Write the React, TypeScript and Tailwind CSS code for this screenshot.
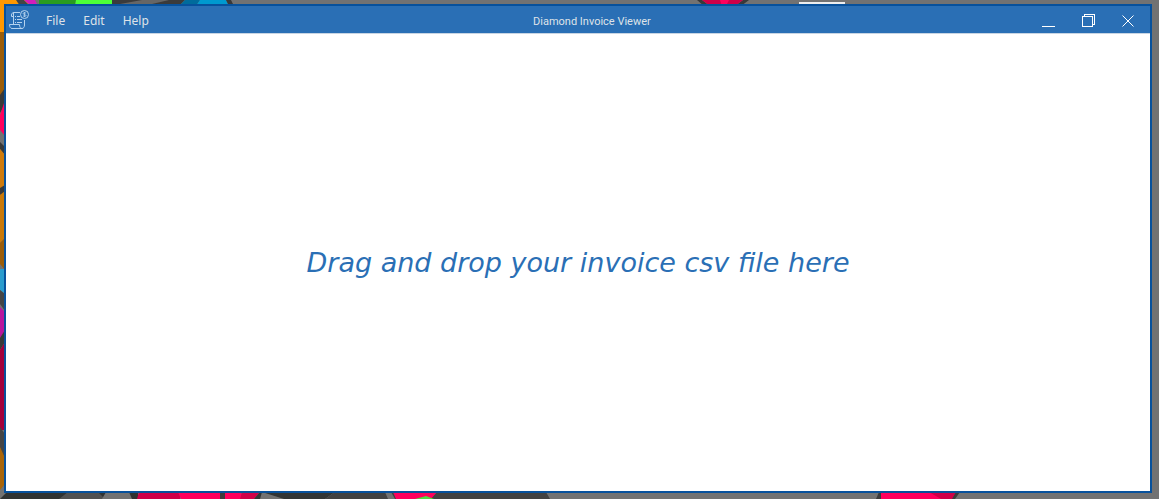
function Wallpaper() {
  return (
    <svg className="absolute inset-0 h-full w-full" viewBox="0 0 1159 499" preserveAspectRatio="none" aria-hidden="true">
      <path fill="#727272" d="M0 0H1159V499H0Z" />
      <path fill="#ff9800" d="M0 0H27L34 6H0Z" />
      <path fill="#454545" d="M16 0H24L30 6H20Z" />
      <path fill="#d31dbc" d="M24 0H35L38 6H31Z" />
      <path fill="#299b20" d="M39 0H76L75 6H39Z" />
      <path fill="#4dff37" d="M76 0H112V6H75Z" />
      <path fill="#3b3b3b" d="M112 0H185L179 6H112Z" />
      <path fill="#666" d="M142 0L120 4H152L169 0Z" />
      <path fill="#006b9c" d="M185 0H200L196 6H179Z" />
      <path fill="#0099cf" d="M200 0H226L229 6H196Z" />
      <path fill="#393939" d="M226 0H231L234 6H229ZM697 0H702L710 6H704ZM743 0H749L741 6H735Z" />
      <path fill="#cf0048" d="M702 0H743L735 6H710Z" />
      <path fill="#ff005d" d="M720 0H729L726 6H722Z" />
      <path fill="#eee" d="M799 2H845V4H799Z" />
      <path fill="#ff9800" d="M0 6H5V32H0Z" />
      <path fill="#9b5d09" d="M0 32H5V95H0Z" />
      <path fill="#393939" d="M0 95L5 88V105L0 113Z" />
      <path fill="#ff005d" d="M0 115L5 100V136L0 130Z" />
      <path fill="#727272" d="M0 130L5 137V150L0 142Z" />
      <path fill="#393939" d="M0 142L5 147V155L0 149Z" />
      <path fill="#cf7b0c" d="M0 149L5 155V186L0 190Z" />
      <path fill="#393939" d="M0 188L5 185V192L0 195Z" />
      <path fill="#c97909" d="M0 195L5 191V238L0 243Z" />
      <path fill="#9b5d09" d="M0 243L5 238V270L0 264Z" />
      <path fill="#299cce" d="M0 269H5V294L0 290Z" />
      <path fill="#454545" d="M0 290L5 294V311L0 304Z" />
      <path fill="#b8169d" d="M0 307L5 312V332L0 338Z" />
      <path fill="#393939" d="M0 338L5 330V342L0 350Z" />
      <path fill="#a3003b" d="M0 350L5 342V430H0Z" />
      <path fill="#454545" d="M0 427L5 434V460L0 448Z" />
      <path fill="#a96509" d="M0 447L5 458V484L0 490Z" />
      <path fill="#303332" d="M0 499L7 492H138V499Z" />
      <path fill="#515151" d="M68 492H98L105 499H59Z" />
      <path fill="#727272" d="M106 492H129L132 499H102Z" />
      <path fill="#cf0048" d="M139 492H180V499H137Z" />
      <path fill="#ff005d" d="M178 492H240L246 499H181Z" />
      <path fill="#403b3c" d="M220 492H225V499H220Z" />
      <path fill="#cf0048" d="M242 492H260L254 499H240Z" />
      <path fill="#323535" d="M260 492H335L325 499H254Z" />
      <path fill="#727272" d="M262 492L284 499H260Z" />
      <path fill="#424242" d="M335 492H546L550 499H325Z" />
      <path fill="#727272" d="M385 492H391L395 499H388Z" />
      <path fill="#ff005d" d="M393 492H437L431 499H396Z" />
      <path fill="#54da43" d="M415 499L426 496L434 499Z" />
      <path fill="#3b3b3b" d="M879 492H960L955 499H876Z" />
      <path fill="#ff005d" d="M881 492H930L945 499H881Z" />
      <path fill="#cf0048" d="M929 492H956L952 499H941Z" />
    </svg>
  );
}

function InvoiceIcon() {
  return (
    <svg className="h-5 w-5" viewBox="0 0 20 20" fill="none" stroke="#b5d3ee" aria-hidden="true">
      <path d="M11 2.500H5C3.500 2.500 2.500 3.500 2.500 5V6.500H4.500M4.500 3V14.500M15.500 10V15C15.500 17 14.500 18.500 13 18.500H3C1.500 18.500.5 17 .5 14.500H10.500C10.500 17 11.500 18.500 13 18.500" />
      <path d="M6 6.500H7M8 6.500H11M6 9.500H7M8 9.500H13M6 12.500H7M8 12.500H13" />
      <circle cx="15.500" cy="4.500" r="4" />
      <path strokeWidth=".8" d="M17 3.200C16 2.500 14.200 2.500 14.200 3.600S17 4.400 17 5.500 15 6.500 14 5.800M15.500 2V7" />
    </svg>
  );
}

const menus = ["File", "Edit", "Help"];

export default function App() {
  return (
    <div className="relative flex min-h-screen pt-1 pr-[7px] pb-[6px] pl-1">
      <Wallpaper />
      <div className="relative flex flex-1 flex-col border-2 border-[#07519c] bg-white">
        <header className="flex h-7 items-center border-b border-[#c8d5e3] bg-[#2a6fb5] text-[#dfe3e8]">
          <div className="flex items-center pl-[3px]">
            <InvoiceIcon />
            <nav className="ml-2 flex font-['Noto_Sans',sans-serif] text-[12px] leading-5">
              {menus.map((menu) => (
                <button key={menu} type="button" className="px-[9px] pt-[2px]">
                  {menu}
                </button>
              ))}
            </nav>
          </div>
          <h1 className="flex-1 pt-1 text-center font-['Roboto',sans-serif] text-[11px] leading-5">Diamond Invoice Viewer</h1>
          <div className="flex items-center gap-[26px] pt-[3px] pr-4 pl-4 text-white">
            <button type="button" aria-label="Minimize">
              <svg className="h-[14px] w-[14px]" viewBox="0 0 14 14" fill="none" stroke="currentColor" shapeRendering="crispEdges">
                <path d="M0 12.500H13" />
              </svg>
            </button>
            <button type="button" aria-label="Restore">
              <svg className="h-[14px] w-[14px]" viewBox="0 0 14 14" fill="none" stroke="currentColor" shapeRendering="crispEdges">
                <path d="M.5 2.500H10.500V12.500H.5ZM2.500 2.500V.5H12.500V10.500H10.500" />
              </svg>
            </button>
            <button type="button" aria-label="Close">
              <svg className="h-[12px] w-[12px]" viewBox="0 0 12 12" fill="none" stroke="currentColor">
                <path d="M.5 .5L11.500 11.500M11.500 .5L.5 11.500" />
              </svg>
            </button>
          </div>
        </header>
        <main className="flex flex-1 items-center justify-center">
          <p className="font-['DejaVu_Sans',sans-serif] text-[27px] leading-9 text-[#2a6fb5] italic">
            Drag and drop your invoice csv file here
          </p>
        </main>
      </div>
    </div>
  );
}
